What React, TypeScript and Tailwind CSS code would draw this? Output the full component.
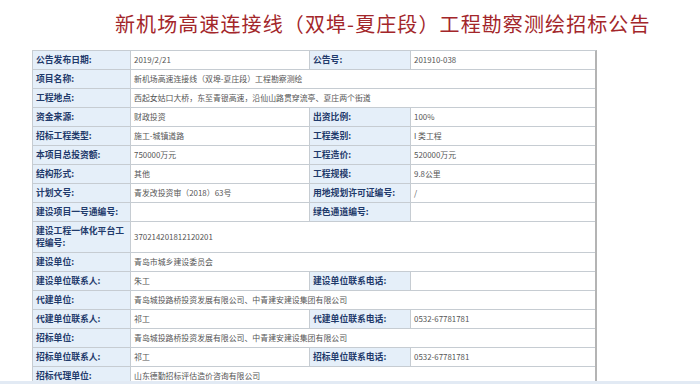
import React from 'react';

type Row = {
    label: string;
    value?: string;
    label2?: string;
    value2?: string;
    tall?: boolean;
};

const rows: Row[] = [
    { label: '公告发布日期:', value: '2019/2/21', label2: '公告号:', value2: '201910-038' },
    { label: '项目名称:', value: '新机场高速连接线（双埠-夏庄段）工程勘察测绘' },
    { label: '工程地点:', value: '西起女姑口大桥，东至青银高速，沿仙山路贯穿流亭、夏庄两个街道' },
    { label: '资金来源:', value: '财政投资', label2: '出资比例:', value2: '100%' },
    { label: '招标工程类型:', value: '施工-城镇道路', label2: '工程类别:', value2: 'I 类工程' },
    { label: '本项目总投资额:', value: '750000万元', label2: '工程造价:', value2: '520000万元' },
    { label: '结构形式:', value: '其他', label2: '工程规模:', value2: '9.8公里' },
    { label: '计划文号:', value: '青发改投资审（2018）63号', label2: '用地规划许可证编号:', value2: '/' },
    { label: '建设项目一号通编号:', value: '', label2: '绿色通道编号:', value2: '' },
    { label: '建设工程一体化平台工程编号:', value: '370214201812120201', tall: true },
    { label: '建设单位:', value: '青岛市城乡建设委员会' },
    { label: '建设单位联系人:', value: '朱工', label2: '建设单位联系电话:', value2: '' },
    { label: '代建单位:', value: '青岛城投路桥投资发展有限公司、中青建安建设集团有限公司' },
    { label: '代建单位联系人:', value: '祁工', label2: '代建单位联系电话:', value2: '0532-67781781' },
    { label: '招标单位:', value: '青岛城投路桥投资发展有限公司、中青建安建设集团有限公司' },
    { label: '招标单位联系人:', value: '祁工', label2: '招标单位联系电话:', value2: '0532-67781781' },
    { label: '招标代理单位:', value: '山东德勤招标评估造价咨询有限公司' },
];

const labelCls =
    'flex items-center pl-[3px] pr-[2px] bg-[#e5eff9] text-[#1f3a6b] font-bold text-[8.8px] leading-[12px] border-r border-[#c6ccd2]';
const valueCls = 'flex items-center px-[3px] text-[#555] text-[7.9px] leading-[12px] border-r border-[#c6ccd2]';

export default function App() {
    return (
        <div
            className="flex flex-col w-[700px] h-[384px] overflow-hidden bg-white"
            style={{ fontFamily: '"Noto Sans CJK SC", "Liberation Sans", sans-serif' }}
        >
            {/* Title */}
            <div className="h-[50px] shrink-0 pl-[115px] pt-[11px]">
                <h1 className="text-[20px] leading-[26px] text-[#a3262a] tracking-[1.1px]">
                    新机场高速连接线（双埠-夏庄段）工程勘察测绘招标公告
                </h1>
            </div>

            {/* Table */}
            <div className="flex-1 overflow-hidden">
                <div className="ml-[32px] w-[565px] border-l border-t border-[#c6ccd2] border-r-2 border-r-[#b4b4b4]">
                    {rows.map((row, i) => (
                        <div
                            key={i}
                            className={`grid grid-cols-[98px_179px_101px_185px] border-b border-[#c6ccd2] ${
                                row.tall ? 'h-[31px]' : 'h-[19px]'
                            }`}
                        >
                            <div className={labelCls}>{row.label}</div>
                            {row.label2 !== undefined ? (
                                <>
                                    <div className={valueCls}>{row.value}</div>
                                    <div className={labelCls}>{row.label2}</div>
                                    <div className={`${valueCls} border-r-0`}>{row.value2}</div>
                                </>
                            ) : (
                                <div className={`${valueCls} col-span-3 border-r-0`}>{row.value}</div>
                            )}
                        </div>
                    ))}
                </div>
            </div>

            {/* bottom strip */}
            <div className="h-[3px] shrink-0 bg-[#e2eaf4]" />
        </div>
    );
}
